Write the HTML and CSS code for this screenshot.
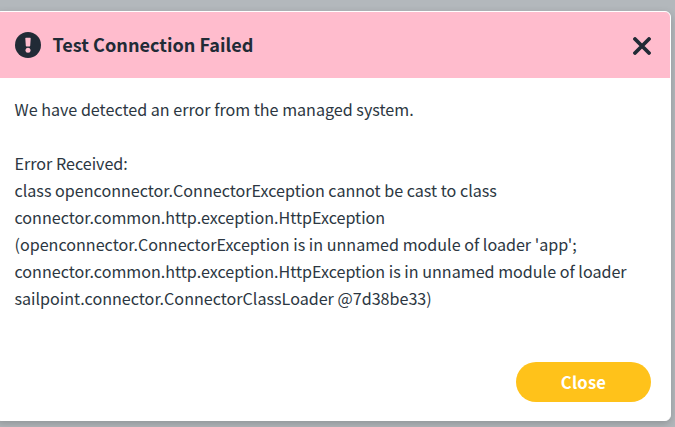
FILE: index.html
```html
<!DOCTYPE html>
<html lang="en">
<head>
	<meta charset="UTF-8">
	<title>Test Connection Failed</title>
	<link rel="stylesheet" href="styles.css">
</head>
<body>
	<div class="modal">
		<div class="modal-header">
			<svg class="icon-error" viewBox="0 0 26 26">
				<circle cx="13" cy="13" r="13"/>
				<path d="M10.9 5.8h4.2q.6 0 .6.6l-.5 7.4q0 .7-.7.7h-3q-.7 0-.7-.7l-.5-7.4q0-.6.6-.6z"/>
				<circle cx="13" cy="18.2" r="2.5"/>
			</svg>
			<h1 class="modal-title">Test Connection Failed</h1>
			<svg class="icon-close" viewBox="0 0 18 18">
				<path d="M2 2l14 14M16 2L2 16"/>
			</svg>
		</div>
		<div class="modal-body">
			<p>We have detected an error from the managed system.</p>
			<br>
			<p>Error Received:</p>
			<p>class openconnector.ConnectorException cannot be cast to class<br>
			connector.common.http.exception.HttpException<br>
			(openconnector.ConnectorException is in unnamed module of loader 'app';<br>
			connector.common.http.exception.HttpException is in unnamed module of loader<br>
			sailpoint.connector.ConnectorClassLoader @7d38be33)</p>
		</div>
		<div class="modal-footer">
			<button class="btn-close">Close</button>
		</div>
	</div>
</body>
</html>
```
FILE: styles.css
```css
*{
	margin: 0;
	padding: 0;
	box-sizing: border-box;
}
body{
	height: 427px;
	padding-top: 11px;
	overflow: hidden;
	background: #b3b8bc;
	font-family: "Noto Sans CJK SC", "Noto Sans", sans-serif;
	color: #2c3742;
}
.modal{
	display: flex;
	flex-direction: column;
	width: 676px;
	height: 410px;
	margin-left: -5.5px;
	border: 1px solid #fff;
	border-radius: 6px;
	background: #fff;
	box-shadow: 0 3px 9px rgba(0,0,0,.2);
	overflow: hidden;
}
.modal-header{
	display: flex;
	align-items: center;
	height: 66px;
	padding: 0 18.5px 0 19.5px;
	background: #ffbccd;
}
.icon-error{
	width: 26px;
	height: 26px;
	fill: #212b36;
}
.icon-error path,
.icon-error circle + path + circle{
	fill: #ffbccd;
}
.modal-title{
	margin: 0 0 2px 11.5px;
	font-size: 18.1px;
	line-height: 27px;
	font-weight: 700;
	color: #212b36;
}
.icon-close{
	width: 18px;
	height: 18px;
	margin-top: 1px;
	margin-left: auto;
	fill: none;
	stroke: #212b36;
	stroke-width: 3.8;
	stroke-linecap: round;
}
.modal-body{
	flex: 1;
	padding: 18px 19px 0;
	font-size: 16.13px;
	line-height: 27px;
	white-space: nowrap;
}
.modal-footer{
	display: flex;
	justify-content: flex-end;
	padding: 0 18.5px 18px;
}
.btn-close{
	width: 135px;
	height: 40px;
	border: none;
	border-radius: 20px;
	background: #ffc21a;
	color: #fff;
	font: 700 16.6px/40px "Noto Sans CJK SC", "Noto Sans", sans-serif;
	letter-spacing: .2px;
}
```
